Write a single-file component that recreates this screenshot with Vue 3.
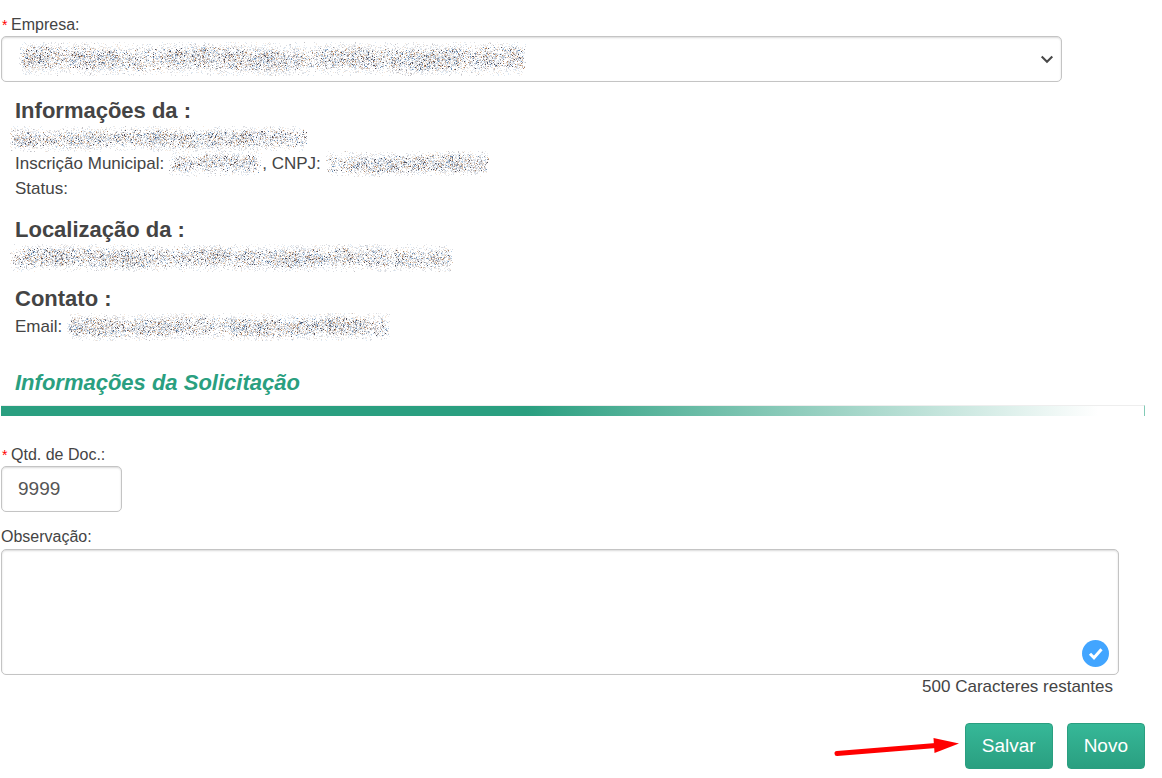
<script setup>
import { ref } from 'vue'

const palette = [
  ['#ececee', 30], ['#dadce1', 26], ['#dfeaf4', 15], ['#f5e9de', 12],
  ['#c3c1c5', 17], ['#b4cbe2', 9], ['#dcbfa6', 7], ['#96969e', 8],
  ['#6d92ba', 3], ['#b08565', 3], ['#50505e', 3]
]

// Speckled strip that hides a private value; one path per tone.
function speckle(width, height, seed) {
  let state = seed * 7919 + 17
  const random = () => {
    state = (state * 1664525 + 1013904223) % 4294967296
    return state / 4294967296
  }
  const total = palette.reduce((sum, tone) => sum + tone[1], 0)
  const paths = palette.map(() => '')
  const count = Math.round(width * height * 0.95)
  for (let i = 0; i < count; i++) {
    const x = Math.floor(random() * width)
    const spread = (random() + random() + random()) / 3
    const wave = Math.sin(x / 13 + seed) * 0.13 + Math.sin(x / 5 + seed * 2) * 0.1 + Math.sin(x / 31 + seed) * 0.1
    if (random() > 0.72 + wave) continue
    const edge = Math.min(x, width - x)
    if (edge < 8 && random() > edge / 8) continue
    const drift = Math.sin(x / 23 + seed * 3) * 0.04
    const y = Math.floor(height * (0.5 + drift + (spread - 0.5) * 1.3))
    if (y < 0 || y >= height) continue
    let pick = random() * total
    if (Math.abs(spread - 0.5) > 0.24) pick *= 0.65
    let tone = 0
    while (pick > palette[tone][1]) pick -= palette[tone++][1]
    paths[tone] += `M${x} ${y}h1v1h-1z`
  }
  return { width, height, paths: paths.map((d, i) => ({ d, fill: palette[i][0] })) }
}

const company = speckle(508, 34, 1)
const name = speckle(299, 26, 2)
const registration = speckle(94, 26, 3)
const cnpj = speckle(164, 26, 4)
const address = speckle(444, 28, 5)
const email = speckle(324, 28, 6)

const quantity = ref('9999')
const note = ref('')
</script>

<template>
  <form class="page" @submit.prevent>
    <label class="label" for="empresa"><span class="req">*</span>Empresa:</label>
    <div class="select-box">
      <select id="empresa" class="field select"><option></option></select>
      <svg class="company" :width="company.width" :height="company.height" aria-hidden="true">
        <path v-for="p in company.paths" :key="p.fill" :d="p.d" :fill="p.fill" />
      </svg>
      <svg class="chevron" width="14" height="9" viewBox="0 0 14 9" aria-hidden="true">
        <path d="M1.700 1.600 7 6.700l5.300-5.100" fill="none" stroke="#484848" stroke-width="2.1" />
      </svg>
    </div>

    <section class="info">
      <h2>Informações da :</h2>
      <p class="row hidden-row">
        <svg :width="name.width" :height="name.height" aria-hidden="true">
          <path v-for="p in name.paths" :key="p.fill" :d="p.d" :fill="p.fill" />
        </svg>
      </p>
      <p class="row">
        <span>Inscrição Municipal:</span>
        <svg class="inline-value" :width="registration.width" :height="registration.height" aria-hidden="true">
          <path v-for="p in registration.paths" :key="p.fill" :d="p.d" :fill="p.fill" />
        </svg>
        <span>, CNPJ:</span>
        <svg class="inline-value" :width="cnpj.width" :height="cnpj.height" aria-hidden="true">
          <path v-for="p in cnpj.paths" :key="p.fill" :d="p.d" :fill="p.fill" />
        </svg>
      </p>
      <p class="row">Status:</p>
    </section>

    <section class="info">
      <h2>Localização da :</h2>
      <p class="row hidden-row">
        <svg :width="address.width" :height="address.height" aria-hidden="true">
          <path v-for="p in address.paths" :key="p.fill" :d="p.d" :fill="p.fill" />
        </svg>
      </p>
    </section>

    <section class="info">
      <h2>Contato :</h2>
      <p class="row">
        <span>Email:</span>
        <svg class="inline-value" :width="email.width" :height="email.height" aria-hidden="true">
          <path v-for="p in email.paths" :key="p.fill" :d="p.d" :fill="p.fill" />
        </svg>
      </p>
    </section>

    <h2 class="title">Informações da Solicitação</h2>
    <hr class="bar">

    <label class="label" for="qtd"><span class="req">*</span>Qtd. de Doc.:</label>
    <input id="qtd" v-model="quantity" class="field quantity" type="text">

    <label class="label note-label" for="obs">Observação:</label>
    <div class="note-box">
      <textarea id="obs" v-model="note" class="field note" maxlength="500"></textarea>
      <svg class="badge" width="27" height="27" viewBox="0 0 27 27" aria-hidden="true">
        <circle cx="13.5" cy="13.5" r="13.5" fill="#42a5ff" />
        <path d="m8 13.700 4 4.100 7.500-8.500" fill="none" stroke="#fff" stroke-width="3" />
      </svg>
    </div>
    <p class="counter">{{ 500 - note.length }} Caracteres restantes</p>

    <div class="actions">
      <svg class="arrow" width="126" height="22" viewBox="0 0 126 22" aria-hidden="true">
        <path d="M3 18.500 102 10.500" stroke="#f00" stroke-width="5" stroke-linecap="round" />
        <path d="M99.500 3 125 8.500 100.500 18z" fill="#f00" />
      </svg>
      <button class="button" type="submit">Salvar</button>
      <button class="button" type="button">Novo</button>
    </div>
  </form>
</template>

<style>
body {
  margin: 0;
  background: #fff;
}
</style>

<style scoped>
.page {
  box-sizing: border-box;
  padding: 14px 17px 8px 1px;
  color: #444;
  font-family: "Liberation Sans", Arial, sans-serif;
  font-size: 17px;
}

.label {
  display: block;
  height: 22px;
  font-size: 16px;
  line-height: 22px;
}

.req {
  display: inline-block;
  width: 10px;
  padding-left: 1px;
  box-sizing: border-box;
  color: #f00;
  font-size: 14px;
  line-height: 16px;
}

.field {
  box-sizing: border-box;
  display: block;
  border: 1px solid #c4c4c4;
  border-radius: 5px;
  background: #fff;
  box-shadow: inset 0 1px 2px rgba(0, 0, 0, 0.15);
  color: #555;
  font: 19px "Liberation Sans", Arial, sans-serif;
  outline: none;
}

.select-box {
  position: relative;
  margin-right: 83px;
  margin-bottom: 16px;
}

.select {
  width: 100%;
  height: 46px;
  padding: 0 16px;
  appearance: none;
}

.company {
  position: absolute;
  top: 6px;
  left: 17px;
  pointer-events: none;
}

.chevron {
  position: absolute;
  top: 19px;
  right: 8px;
  pointer-events: none;
}

.info {
  padding-left: 14px;
  margin-bottom: 16px;
}

h2 {
  margin: 0;
  font-size: 22px;
  line-height: 26px;
}

.row {
  display: flex;
  align-items: center;
  height: 25px;
  margin: 0;
  line-height: 25px;
}

.info h2 + .row {
  margin-top: 2px;
}

.row svg {
  flex: none;
}

.hidden-row {
  margin-left: -6px;
}

.inline-value {
  margin-left: 4px;
}

.title {
  padding-left: 14px;
  margin-top: 31px;
  color: #2a9f80;
  font-style: italic;
}

.bar {
  box-sizing: border-box;
  height: 11px;
  margin: 9px 0 28px;
  border: 0;
  border-top: 1px solid #eee;
  border-right: 1px solid #82cab6;
  background: linear-gradient(to right, #2a9f80 0%, #2a9f80 46%, #fff 96%);
}

.quantity {
  width: 121px;
  height: 46px;
  padding: 0 16px;
}

.note-label {
  height: 23px;
  margin-top: 14px;
}

.note-box {
  position: relative;
  margin-right: 26px;
}

.note {
  width: 100%;
  height: 126px;
  padding: 10px 16px;
  resize: none;
}

.badge {
  position: absolute;
  right: 10px;
  bottom: 8px;
}

.counter {
  margin: 0 32px 24px 0;
  line-height: 24px;
  text-align: right;
}

.actions {
  display: flex;
  justify-content: flex-end;
  gap: 14px;
}

.arrow {
  align-self: center;
  margin-right: -9px;
}

.button {
  height: 46px;
  padding: 0 16px;
  border: 1px solid #2a9f80;
  border-radius: 4px;
  background: linear-gradient(#36b898, #2a9f80);
  color: #fff;
  font: 19px "Liberation Sans", Arial, sans-serif;
}
</style>
